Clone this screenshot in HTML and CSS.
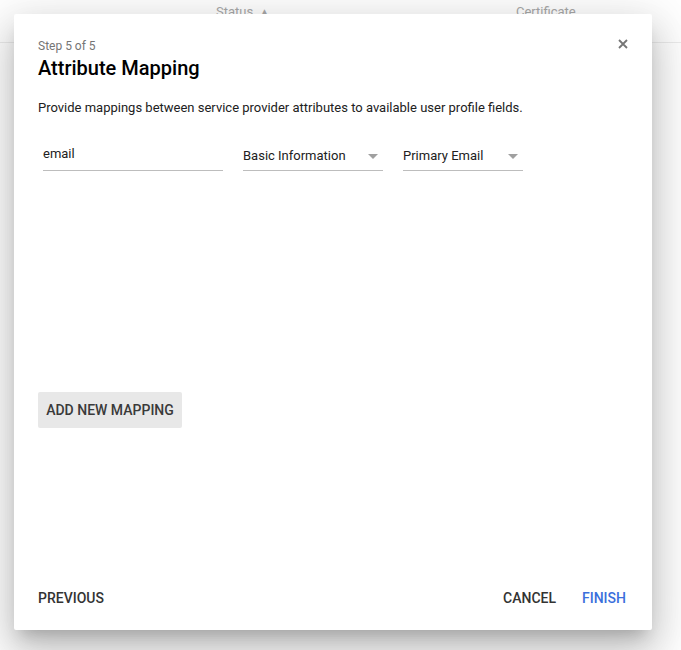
FILE: index.html
```html
<!DOCTYPE html>
<html>
<head>
<meta charset="utf-8">
<link rel="stylesheet" href="styles.css">
</head>
<body>
<div class="page">
  <div class="table-head">
    <span class="th th-status">Status <span class="sort">▲</span></span>
    <span class="th th-cert">Certificate</span>
  </div>
</div>
<div class="dialog">
  <div class="dialog-body">
    <div class="step">Step 5 of 5</div>
    <h1 class="title">Attribute Mapping</h1>
    <button class="close" aria-label="Close">
      <svg width="10" height="10" viewBox="0 0 10 10"><path d="M1 1L9 9M9 1L1 9" stroke="#757575" stroke-width="1.8" fill="none"/></svg>
    </button>
    <p class="desc">Provide mappings between service provider attributes to available user profile fields.</p>
    <div class="mappings">
      <div class="row">
        <div class="field field-input">email</div>
        <div class="field field-select sel-1"><span>Basic Information</span><span class="arrow"></span></div>
        <div class="field field-select sel-2"><span>Primary Email</span><span class="arrow"></span></div>
      </div>
    </div>
    <button class="add-btn">ADD NEW MAPPING</button>
  </div>
  <div class="footer">
    <button class="text-btn">PREVIOUS</button>
    <div class="spacer"></div>
    <button class="text-btn">CANCEL</button>
    <button class="text-btn primary">FINISH</button>
  </div>
</div>
</body>
</html>
```
FILE: styles.css
```css
* { box-sizing: border-box; }
html, body {
  margin: 0;
  padding: 0;
  background: #ffffff;
  font-family: Roboto, "Noto Sans", Arial, sans-serif;
  width: 681px;
  height: 650px;
  overflow: hidden;
}
.page {
  width: 681px;
  height: 650px;
  background: #fff;
}
.table-head {
  height: 43px;
  border-bottom: 1px solid #ececec;
  position: relative;
  font-size: 13px;
  color: #a8a8a8;
}
.th {
  position: absolute;
  top: 4px;
}
.th-status { left: 216px; }
.th-cert { left: 516px; }
.sort { font-size: 8px; vertical-align: 2px; margin-left: 4px; }

.dialog {
  position: absolute;
  left: 14px;
  top: 14px;
  width: 638px;
  height: 616px;
  background: #fff;
  border-radius: 2px;
  box-shadow: 0 11px 15px -7px rgba(0,0,0,.2), 0 24px 38px 3px rgba(0,0,0,.14), 0 9px 46px 8px rgba(0,0,0,.12);
  display: flex;
  flex-direction: column;
}
.dialog-body {
  position: relative;
  padding: 24px 24px 0;
  flex: 1;
}
.step {
  font-size: 12px;
  line-height: 16px;
  color: #757575;
}
.title {
  margin: 0;
  font-size: 20px;
  line-height: 28px;
  font-weight: 500;
  color: #000;
}
.close {
  position: absolute;
  right: 23px;
  top: 24px;
  width: 12px;
  height: 12px;
  padding: 0;
  border: none;
  background: none;
  display: flex;
  align-items: center;
  justify-content: center;
}
.desc {
  margin: 16px 0 0;
  font-size: 13px;
  line-height: 20px;
  color: #212121;
}
.mappings {
  height: 274px;
  padding-top: 22px;
}
.row {
  display: flex;
  gap: 20px;
  padding-left: 5px;
}
.field {
  height: 31px;
  border-bottom: 1px solid #bdbdbd;
  font-size: 13px;
  line-height: 20px;
  color: #212121;
  display: flex;
  align-items: flex-end;
}
.field-input {
  width: 180px;
  padding-bottom: 6px;
}
.field-select {
  justify-content: space-between;
  padding-right: 5px;
  padding-bottom: 4px;
}
.sel-1 { width: 140px; }
.sel-2 { width: 120px; }
.arrow {
  width: 0;
  height: 0;
  border-left: 5px solid transparent;
  border-right: 5px solid transparent;
  border-top: 5px solid #a0a0a0;
  margin-bottom: 7px;
}
.add-btn {
  display: block;
  height: 36px;
  width: 144px;
  padding: 0;
  border: none;
  border-radius: 2px;
  background: #e8e8e8;
  font-family: inherit;
  font-size: 14px;
  font-weight: 500;
  color: #3a3a3a;
  letter-spacing: 0;
}
.footer {
  display: flex;
  align-items: center;
  padding: 0 26px 4px 24px;
  gap: 26px;
  height: 60px;
}
.spacer { flex: 1; }
.text-btn {
  border: none;
  background: none;
  padding: 0;
  font-family: inherit;
  font-size: 14px;
  font-weight: 500;
  color: #333;
  line-height: 20px;
}
.text-btn.primary { color: #3b6fdc; }
```
